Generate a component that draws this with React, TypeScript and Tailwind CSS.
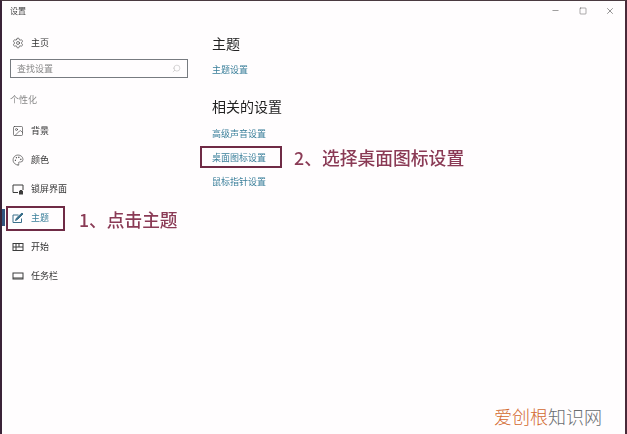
import { Minus, Square, X, Search, Settings, Image, Palette } from 'lucide-react'
import type { ReactNode } from 'react'

const cjk = "font-['Noto_Sans_CJK_SC','Liberation_Sans',sans-serif]"

function LockScreenIcon() {
  return (
    <svg width="12" height="12" viewBox="0 0 12 12" fill="none" stroke="currentColor" strokeWidth="1">
      <path d="M6 9.5H1V2h10v5" />
      <rect x="7.5" y="8.5" width="3" height="2.5" fill="currentColor" />
      <path d="M8 8.5V7.5h2v1" />
    </svg>
  )
}

function ThemeIcon() {
  return (
    <svg width="12" height="12" viewBox="0 0 12 12" fill="none" stroke="currentColor" strokeWidth="1">
      <path d="M9.5 6.5V10.5H1V3h5.5" />
      <path d="M3.5 8.5 4.5 6 10 1l1 1-5.5 5.5z" fill="currentColor" />
    </svg>
  )
}

function StartIcon() {
  return (
    <svg width="12" height="12" viewBox="0 0 12 12" fill="none" stroke="currentColor" strokeWidth="1">
      <rect x="1" y="2.5" width="10" height="7" />
      <path d="M1 6h10M4 2.5v7M7 2.5V6" />
    </svg>
  )
}

function TaskbarIcon() {
  return (
    <svg width="12" height="12" viewBox="0 0 12 12" fill="none" stroke="currentColor" strokeWidth="1">
      <rect x="1" y="3" width="10" height="6" />
      <path d="M1 8h10" />
    </svg>
  )
}

type NavItem = { label: string; icon: ReactNode; active?: boolean }

const navItems: NavItem[] = [
  { label: '背景', icon: <Image size={12} strokeWidth={1.25} /> },
  { label: '颜色', icon: <Palette size={12} strokeWidth={1.25} /> },
  { label: '锁屏界面', icon: <LockScreenIcon /> },
  { label: '主题', icon: <ThemeIcon />, active: true },
  { label: '开始', icon: <StartIcon /> },
  { label: '任务栏', icon: <TaskbarIcon /> },
]

const relatedLinks = ['高级声音设置', '桌面图标设置', '鼠标指针设置']

function NavRow({ label, icon, active }: NavItem) {
  return (
    <div className={`relative flex h-[29px] items-center gap-[7px] pl-[10px] text-[9px] ${active ? 'text-[#3a7f9a]' : 'text-[#333]'}`}>
      {active && <span className="absolute left-0 top-[6px] h-[17px] w-[3px] bg-[#34557f]" />}
      <span className={active ? 'text-[#3a6f8a]' : 'text-[#3c3c3c]'}>{icon}</span>
      <span>{label}</span>
    </div>
  )
}

export default function App() {
  return (
    <div className={`relative h-[434px] w-[627px] overflow-hidden border-x-2 border-t border-l-[#3a2338] border-r-[#4a2a3a] border-t-[#4a3a40] bg-[#fffdfe] ${cjk}`}>
      <div className="flex h-full flex-col blur-[0.5px]">
        <header className="flex h-[19px] shrink-0 items-center justify-between pl-[8px] text-[8px] text-[#444]">
          <span>设置</span>
          <div className="flex items-center pr-[2px] text-[#333]">
            <span className="flex w-[27px] justify-center"><Minus size={9} strokeWidth={1.25} /></span>
            <span className="flex w-[27px] justify-center"><Square size={8} strokeWidth={1.25} /></span>
            <span className="flex w-[27px] justify-center"><X size={10} strokeWidth={1.25} /></span>
          </div>
        </header>

        <div className="flex flex-1">
          <nav className="w-[194px] shrink-0">
            <div className="mt-[8px] flex h-[30px] items-center gap-[7px] pl-[10px] text-[9px] text-[#333]">
              <Settings size={12} strokeWidth={1.25} />
              <span>主页</span>
            </div>
            <div className="mx-[8px] mt-[1px] flex h-[19px] items-center justify-between border-[1.5px] border-[#777b80] px-[6px] text-[9px] text-[#888]">
              <span>查找设置</span>
              <Search size={9} strokeWidth={1} className="-scale-x-100 text-[#999]" />
            </div>
            <div className="mt-[12px] mb-[6px] h-[20px] pl-[8px] text-[9px] leading-[20px] text-[#888]">个性化</div>
            {navItems.map((item) => (
              <NavRow key={item.label} {...item} />
            ))}
          </nav>

          <main className="flex-1 pl-[16px]">
            <h1 className="mt-[11px] text-[14px] leading-[24px] font-normal text-[#222]">主题</h1>
            <a className="mt-[7px] block text-[9px] leading-[16px] text-[#3a7f9a]">主题设置</a>
            <h2 className="mt-[16px] text-[14px] leading-[24px] font-normal text-[#222]">相关的设置</h2>
            <div className="mt-[8px] flex flex-col gap-[8px]">
              {relatedLinks.map((link) => (
                <a key={link} className="block text-[9px] leading-[16px] text-[#3a7f9a]">{link}</a>
              ))}
            </div>
          </main>
        </div>

        {/* red annotations sit on top of the screenshot */}
        <div className="absolute left-[4px] top-[205px] h-[25px] w-[59px] border-2 border-[#6f2a45]" />
        <span className="absolute left-[77px] top-[205px] text-[17.7px] leading-[26px] font-medium text-[#8a3a55]">1、点击主题</span>
        <div className="absolute left-[198px] top-[145px] h-[22px] w-[82px] border-2 border-[#6f2a45]" />
        <span className="absolute left-[292px] top-[144px] text-[17.8px] leading-[24px] font-medium text-[#8a3a55]">2、选择桌面图标设置</span>
      </div>

      <div className="absolute left-[492px] top-[402px] text-[18px] leading-[26px] font-light">
        <span className="text-[#d2692f]">爱创根</span>
        <span className="text-[#6a6d70]">知识网</span>
      </div>
    </div>
  )
}
